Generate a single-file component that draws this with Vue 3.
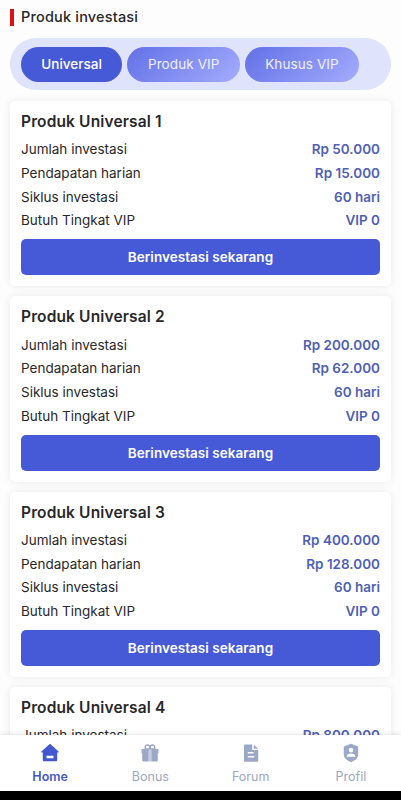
<script setup>
const tabs = ['Universal', 'Produk VIP', 'Khusus VIP']
const sharedRows = [
  ['Siklus investasi', '60 hari'],
  ['Butuh Tingkat VIP', 'VIP 0'],
]
const products = [
  { name: 'Produk Universal 1', rows: [['Jumlah investasi', 'Rp 50.000'], ['Pendapatan harian', 'Rp 15.000'], ...sharedRows] },
  { name: 'Produk Universal 2', rows: [['Jumlah investasi', 'Rp 200.000'], ['Pendapatan harian', 'Rp 62.000'], ...sharedRows] },
  { name: 'Produk Universal 3', rows: [['Jumlah investasi', 'Rp 400.000'], ['Pendapatan harian', 'Rp 128.000'], ...sharedRows] },
  { name: 'Produk Universal 4', rows: [['Jumlah investasi', 'Rp 800.000']], partial: true },
]
</script>

<template>
  <div class="screen">
    <main class="content">
      <h1 class="heading"><i class="mark"></i><span>Produk investasi</span></h1>
      <div class="tabs">
        <button v-for="(t, i) in tabs" :key="t" class="tab" :class="{ active: i === 0 }">{{ t }}</button>
      </div>
      <section v-for="p in products" :key="p.name" class="card">
        <h2>{{ p.name }}</h2>
        <div v-for="r in p.rows" :key="r[0]" class="row">
          <span>{{ r[0] }}</span><b>{{ r[1] }}</b>
        </div>
        <button v-if="!p.partial" class="invest">Berinvestasi sekarang</button>
      </section>
    </main>
    <nav class="nav">
      <a class="item on">
        <svg viewBox="0 0 20 20"><path fill-rule="evenodd" d="M10 .8 18.600 8.500q.5.9-.4.900h-1v7.700q0 1.200-1.200 1.200H4q-1.200 0-1.200-1.200V9.400h-1q-.9 0-.4-.9zM6.500 12.800v2.500h7v-2.500z" /></svg>
        <span>Home</span>
      </a>
      <a class="item">
        <svg viewBox="0 0 20 20">
          <path d="M1.500 6h7.200v4.500h-7.200zM11.300 6h7.200v4.500h-7.200zM2.200 10h6.500v8.500H3.200q-1 0-1-1zM11.300 10h6.500v7.500q0 1-1 1h-5.500zM9.400 7h1.200v11.500H9.400z" />
          <path d="M5.300 6V4.200a2.200 2.200 0 0 1 4.400 0V6zm5 0V4.200a2.200 2.200 0 0 1 4.400 0V6z" fill="none" stroke="currentColor" stroke-width="1.500" />
        </svg>
        <span>Bonus</span>
      </a>
      <a class="item">
        <svg viewBox="0 0 20 20"><path fill-rule="evenodd" d="M4 1.500h7.200V7h6v10.700q0 1-1 1H4q-1 0-1-1V2.500q0-1 1-1zM6.800 8.900v1.600h5.700V8.900zM6.800 13v1.600h6.400V13zM12.800 1.500l4.400 4.300h-4.400z" /></svg>
        <span>Forum</span>
      </a>
      <a class="item">
        <svg viewBox="0 0 20 20"><path fill-rule="evenodd" d="m10 .8 7.200 2.600v8q0 4.500-7.200 7.800-7.200-3.300-7.200-7.800v-8zM10 4.800a2.300 2.300 0 1 0 0 4.600 2.300 2.300 0 0 0 0-4.600M5.700 13.800h8.600q-.2-3.200-4.300-3.200t-4.300 3.200" /></svg>
        <span>Profil</span>
      </a>
    </nav>
    <div class="system"></div>
  </div>
</template>

<style>
body {
  overflow: hidden;
}
</style>

<style scoped>
* {
  box-sizing: border-box;
}
.screen {
  display: flex;
  flex-direction: column;
  height: 800px;
  overflow: hidden;
  background: #fdfdfd;
  font-family: Inter, 'Liberation Sans', sans-serif;
  color: #28282a;
}
.content {
  flex: 1;
  min-height: 0;
  overflow: hidden;
  padding: 7px 10px 0;
}
.heading {
  display: flex;
  align-items: center;
  gap: 7px;
  height: 20px;
  margin: 0 0 11px;
  font-size: 14.500px;
  font-weight: 500;
  letter-spacing: 0.180px;
  line-height: 18px;
}
.heading span {
  padding-bottom: 1px;
}
.mark {
  width: 4px;
  height: 17px;
  background: #df1014;
}
.tabs {
  display: flex;
  align-items: center;
  gap: 5px;
  height: 52px;
  margin-bottom: 11px;
  padding: 0 10.600px;
  border-radius: 26px;
  background: #dfe3fb;
}
button {
  border: 0;
  padding: 0;
  font-family: inherit;
  color: #fff;
}
.tab {
  width: 114px;
  height: 35px;
  border-radius: 18px;
  background: linear-gradient(135deg, #6270e6, #a3acfd);
  font-size: 13.500px;
  letter-spacing: 0.100px;
  color: #eef0ff;
}
.tab:nth-child(2) {
  width: 112.500px;
}
.tab.active {
  width: 101.900px;
  background: #465ad8;
  color: #fff;
  font-weight: 500;
  letter-spacing: 0;
}
.card {
  height: 185.400px;
  margin-bottom: 10px;
  padding: 10px 11px 10px 11px;
  border-radius: 5px;
  background: #fff;
  box-shadow: 0 0 9px rgba(0, 0, 0, 0.08);
}
h2 {
  margin: 0 0 6.300px;
  font-size: 15.500px;
  line-height: 21px;
  font-weight: 600;
  letter-spacing: 0.140px;
}
.row {
  display: flex;
  justify-content: space-between;
  font-size: 13.500px;
  line-height: 23.700px;
}
.row b {
  font-weight: 600;
  color: #4f5fb5;
}
.invest {
  display: block;
  width: 100%;
  height: 36px;
  margin-top: 6.100px;
  border-radius: 5px;
  background: #465ad8;
  font-size: 13.500px;
  font-weight: 600;
  letter-spacing: 0.040px;
}
.nav {
  position: relative;
  display: flex;
  height: 56px;
  background: #fff;
  box-shadow: 0 0 5px rgba(0, 0, 0, 0.15);
}
.item {
  flex: 1;
  display: flex;
  flex-direction: column;
  align-items: center;
  padding-top: 8px;
  font-size: 12.500px;
  line-height: 18px;
  color: #9ba9bd;
}
.item svg {
  width: 20px;
  height: 20px;
  margin-bottom: 5px;
  fill: #9ca8c8;
  color: #9ca8c8;
}
.item.on {
  color: #4458c6;
  font-weight: 600;
}
.item.on svg {
  fill: #4257d0;
}
.system {
  position: relative;
  height: 9px;
  background: #000;
}
</style>
